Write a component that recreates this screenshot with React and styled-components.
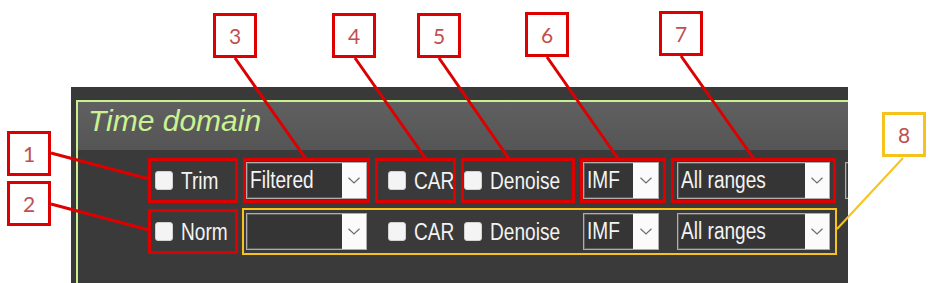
import React from 'react'
import styled, { createGlobalStyle } from 'styled-components'

const RED = '#dc0000'
const YELLOW = '#f6c21c'
const GREEN = '#c8f08e'

const GlobalStyle = createGlobalStyle`
  html, body {
    margin: 0;
    padding: 0;
    background: #ffffff;
  }
`

const callouts = [
  { n: 1, x: 7, y: 131 },
  { n: 2, x: 7, y: 181 },
  { n: 3, x: 213, y: 13 },
  { n: 4, x: 332, y: 13 },
  { n: 5, x: 417, y: 13 },
  { n: 6, x: 525, y: 12 },
  { n: 7, x: 659, y: 11 },
  { n: 8, x: 882, y: 112, color: YELLOW }
]

const leaders = [
  { from: [51, 153], to: [149, 179] },
  { from: [51, 204], to: [149, 230] },
  { from: [235, 58], to: [306, 159] },
  { from: [355, 58], to: [426, 159] },
  { from: [439, 58], to: [509, 159] },
  { from: [547, 57], to: [619, 160] },
  { from: [681, 56], to: [754, 159] },
  { from: [903, 158], to: [837, 229], color: YELLOW, width: 2 }
]

const Chevron = () => (
  <svg width="12" height="7" viewBox="0 0 12 7">
    <polyline points="0.5,0.8 6,6 11.5,0.8" fill="none" stroke="#6d6d6d" strokeWidth="1.2" />
  </svg>
)

const Select = ({ value, width, button = 24 }) => (
  <Dropdown width={width}>
    <Value><Narrow>{value}</Narrow></Value>
    <DropButton width={button}><Chevron /></DropButton>
  </Dropdown>
)

const Check = ({ label }) => (
  <React.Fragment>
    <Box />
    <Label><Narrow>{label}</Narrow></Label>
  </React.Fragment>
)

const App = () => {
  return (
    <Page>
      <GlobalStyle />
      <Panel>
        <Frame>
          <Header>
            <Title>Time domain</Title>
          </Header>
          <Body>
            <Row>
              <Slot width={90} pad={4} marked><Check label="Trim" /></Slot>
              <Slot width={127} marked><Select value="Filtered" width={121} /></Slot>
              <Slot width={81} pad={10} marked><Check label="CAR" /></Slot>
              <Slot width={114} pad={0} marked><Check label="Denoise" /></Slot>
              <Slot width={86} marked><Select value="IMF" width={76} button={25} /></Slot>
              <Slot width={165} marked center><Select value="All ranges" width={153} /></Slot>
              <Trailing><Select value="" width={120} /></Trailing>
            </Row>
            <Row>
              <Slot width={90} pad={4} marked><Check label="Norm" /></Slot>
              <Group>
                <Slot width={127}><Select value="" width={121} /></Slot>
                <Slot width={81} pad={10}><Check label="CAR" /></Slot>
                <Slot width={114} pad={0}><Check label="Denoise" /></Slot>
                <Slot width={86}><Select value="IMF" width={76} button={25} /></Slot>
                <Slot width={165} center><Select value="All ranges" width={153} /></Slot>
              </Group>
            </Row>
          </Body>
        </Frame>
      </Panel>

      <Leaders width="934" height="283" viewBox="0 0 934 283">
        {leaders.map((l, i) => (
          <line
            key={i}
            x1={l.from[0]} y1={l.from[1]} x2={l.to[0]} y2={l.to[1]}
            stroke={l.color || RED}
            strokeWidth={l.width || 3}
          />
        ))}
      </Leaders>

      {callouts.map(c => (
        <Callout key={c.n} x={c.x} y={c.y} color={c.color || RED}>{c.n}</Callout>
      ))}
    </Page>
  )
}

export default App

// STYLES
const Page = styled.div`
  position: relative;
  width: 934px;
  height: 283px;
  box-sizing: border-box;
  padding: 87px 0 0 71px;
  background: #ffffff;
  overflow: hidden;
  font-family: "Liberation Sans", Arial, sans-serif;
`

const Panel = styled.div`
  width: 777px;
  height: 196px;
  box-sizing: border-box;
  padding: 13px 0 0 5px;
  background: #393939;
`

const Frame = styled.div`
  height: 100%;
  border-left: 2px solid ${GREEN};
  border-top: 2px solid ${GREEN};
  overflow: hidden;
  background: #3a3a3a;
`

const Header = styled.div`
  height: 48px;
  box-sizing: border-box;
  padding: 2px 0 0 10px;
  background: linear-gradient(#606060, #555555);
`

const Title = styled.div`
  font-style: italic;
  font-size: 30px;
  line-height: 34px;
  color: #caf293;
`

const Body = styled.div`
  display: flex;
  flex-direction: column;
  gap: 6px;
  padding: 8px 0 0 70px;
`

const Row = styled.div`
  display: flex;
  gap: 5px;
  height: 45px;
`

const Slot = styled.div`
  flex-shrink: 0;
  width: ${props => props.width}px;
  box-sizing: border-box;
  border: 3px solid ${props => (props.marked ? RED : 'transparent')};
  display: flex;
  align-items: center;
  justify-content: ${props => (props.center ? 'center' : 'flex-start')};
  padding-left: ${props => (props.pad !== undefined ? props.pad : 0)}px;
`

const Group = styled.div`
  flex-shrink: 0;
  display: flex;
  gap: 5px;
  outline: 2px solid ${YELLOW};
  outline-offset: -1px;
`

const Trailing = styled.div`
  flex-shrink: 0;
  display: flex;
  align-items: center;
  margin-left: 4px;
`

const Box = styled.span`
  flex-shrink: 0;
  width: 18px;
  height: 19px;
  box-sizing: border-box;
  border-radius: 3px;
  border: 1px solid #d2d2d2;
  background: #f4f4f4;
`

// the app font is a narrow sans; squeeze the regular one to match its width
const Narrow = styled.span`
  display: inline-block;
  transform: scaleX(0.83);
  transform-origin: left center;
`

const Label = styled.span`
  margin-left: 8px;
  font-size: 23px;
  line-height: 26px;
  color: #f3f3f3;
  white-space: nowrap;
`

const Dropdown = styled.div`
  flex-shrink: 0;
  display: flex;
  width: ${props => props.width}px;
  height: 37px;
  box-sizing: border-box;
  border: 1px solid #adadad;
  box-shadow: inset 0 0 0 1px #5c5c5c;
  background: #353535;
`

const Value = styled.span`
  flex: 1;
  padding-left: 3px;
  font-size: 23px;
  line-height: 35px;
  color: #f3f3f3;
  white-space: nowrap;
  overflow: hidden;
`

const DropButton = styled.span`
  width: ${props => props.width}px;
  display: flex;
  align-items: center;
  justify-content: center;
  background: #fbfbfb;
`

const Leaders = styled.svg`
  position: absolute;
  top: 0;
  left: 0;
  pointer-events: none;
`

const Callout = styled.div`
  position: absolute;
  left: ${props => props.x}px;
  top: ${props => props.y}px;
  width: 44px;
  height: 45px;
  box-sizing: border-box;
  border: 3px solid ${props => props.color};
  background: #ffffff;
  display: flex;
  align-items: center;
  justify-content: center;
  font-family: Lato, "Open Sans", sans-serif;
  font-size: 21px;
  color: #c0504d;
`
